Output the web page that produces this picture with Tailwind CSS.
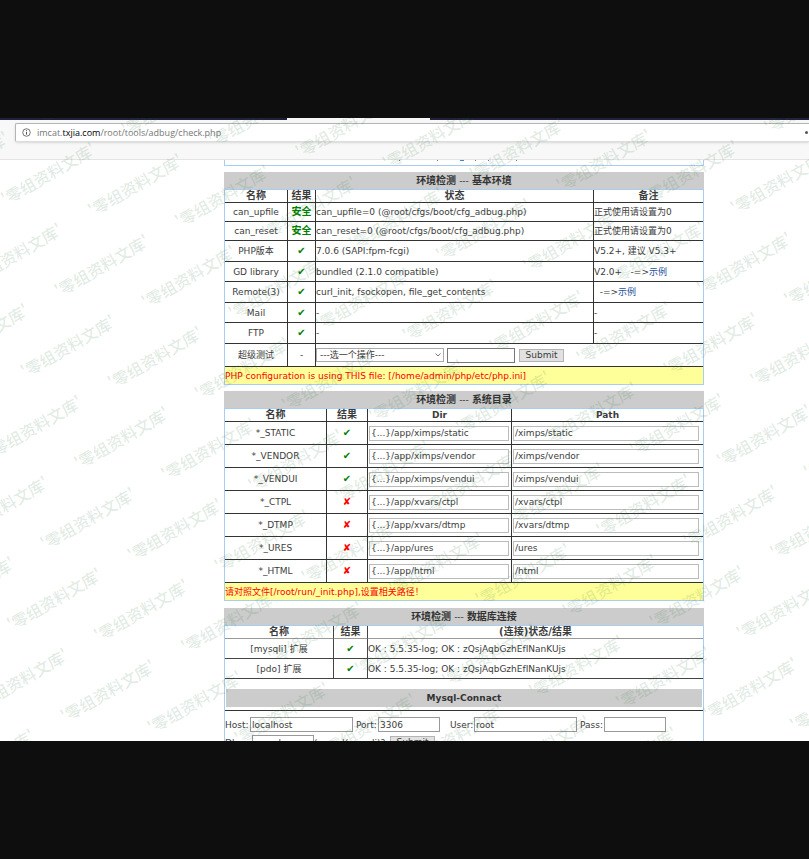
<!DOCTYPE html>
<html lang="zh-CN">
<head>
<meta charset="utf-8">
<title>环境检测</title>
<script src="https://cdn.jsdelivr.net/npm/@tailwindcss/browser@4"></script>
</head>
<body class="flex h-screen flex-col bg-[#0e0e0e] py-[118px] text-[9px] leading-3 text-[#3c3c3c] font-['DejaVu_Sans','Noto_Sans_CJK_SC',sans-serif]">
<div class="relative flex min-h-0 flex-1 flex-col overflow-hidden bg-white">

  <header class="shrink-0 border-b border-[#e4e4e4] bg-[#f8f8f8]">
    <div class="flex h-[2px] bg-[#20203c]"><div class="ml-[287px] w-[143px] bg-[#f8f8f8]"></div></div>
    <div class="h-[39px] pt-[3px] pl-[15px]">
      <div class="flex h-[19px] items-center rounded-l-xs border-y border-l border-t-[#b4b4b4] border-b-[#dcdcdc] border-l-[#b4b4b4] bg-white pl-1.5 shadow-sm">
        <svg class="mr-1.5 size-[9px] shrink-0" viewBox="0 0 10 10" fill="none" stroke="#555" aria-hidden="true"><circle cx="5" cy="5" r="4.2" stroke-width=".9"/><path d="M5 4.4v3M5 2.4v1.1" stroke-width="1.1"/></svg>
        <a href="#" class="flex-1 text-[9px] text-[#777] font-['Open_Sans',sans-serif]">imcat.<span class="text-black">txjia.com</span>/root/tools/adbug/check.php</a>
        <button type="button" aria-label="更多" class="mr-px flex gap-0.5"><span class="size-[3px] rounded-full bg-[#555]"></span></button>
      </div>
    </div>
  </header>

  <main class="mr-[105px] ml-56 flex flex-col">
    <div class="mb-1.5 h-[6px] border-x border-b border-[#a9cdf0]">
      <svg class="block h-[2px] w-full" aria-hidden="true"><path d="M174 .5h1M212 .5h1M250 .5h1M291 .5h1" stroke="#777"/><path d="M235 .5h4M263 .5h1" stroke="#3f86d0"/></svg>
    </div>

    <section class="mb-1.5">
      <h2 class="flex h-[17px] items-center justify-center gap-[3px] bg-[#ccc] pt-px text-[10px] font-bold text-[#333]">环境检测 <span class="text-[9px] font-normal">---</span> 基本环境</h2>
      <div class="border border-[#a9cdf0]">
        <table class="w-full table-fixed border-separate border-spacing-0 text-center [&_td]:border-b [&_td]:border-[#333] [&_td]:p-0 [&_th]:h-[13px] [&_th]:border-b [&_th]:border-[#333] [&_th]:p-0 [&_th]:text-[10px] [&_td+td]:border-l [&_th+th]:border-l [&_tr>:nth-child(n+3)]:whitespace-nowrap">
          <colgroup><col class="w-[62px]"><col class="w-[28px]"><col><col class="w-[110px]"></colgroup>
          <thead><tr><th>名称</th><th>结果</th><th>状态</th><th>备注</th></tr></thead>
          <tbody>
            <tr class="h-[19px]"><td>can_upfile</td><td class="text-[10px] font-bold text-[#008000]">安全</td><td class="text-left">can_upfile=0 (@root/cfgs/boot/cfg_adbug.php)</td><td class="text-left">正式使用请设置为0</td></tr>
            <tr class="h-[19px]"><td>can_reset</td><td class="text-[10px] font-bold text-[#008000]">安全</td><td class="text-left">can_reset=0 (@root/cfgs/boot/cfg_adbug.php)</td><td class="text-left">正式使用请设置为0</td></tr>
            <tr class="h-[21px]"><td>PHP版本</td><td class="text-[10px] font-bold text-[#008000]">✔</td><td class="text-left">7.0.6 (SAPI:fpm-fcgi)</td><td class="text-left">V5.2+, 建议 V5.3+</td></tr>
            <tr class="h-[20px]"><td>GD library</td><td class="text-[10px] font-bold text-[#008000]">✔</td><td class="text-left">bundled (2.1.0 compatible)</td><td class="text-left">V2.0+ &nbsp; -=&gt;<a href="#" class="text-[#1c4f9c]">示例</a></td></tr>
            <tr class="h-[21px]"><td>Remote(3)</td><td class="text-[10px] font-bold text-[#008000]">✔</td><td class="text-left">curl_init, fsockopen, file_get_contents</td><td class="text-left">&nbsp; -=&gt;<a href="#" class="text-[#1c4f9c]">示例</a></td></tr>
            <tr class="h-[20px]"><td>Mail</td><td class="text-[10px] font-bold text-[#008000]">✔</td><td class="text-left">-</td><td class="text-left">-</td></tr>
            <tr class="h-[21px]"><td>FTP</td><td class="text-[10px] font-bold text-[#008000]">✔</td><td class="text-left">-</td><td class="text-left">-</td></tr>
            <tr class="h-[23px]"><td>超级测试</td><td>-</td>
              <td colspan="2">
                <form class="flex items-center">
                  <span class="relative flex">
                    <select aria-label="选一个操作" class="h-[14px] w-[128px] appearance-none border border-[#aaa] bg-white pl-[3px] leading-3"><option>---选一个操作---</option></select>
                    <svg class="pointer-events-none absolute top-[5px] right-[3px] h-[4px] w-[6px]" viewBox="0 0 6 4" fill="none" stroke="#777" aria-hidden="true"><path d="M.5.5 3 3 5.5.5"/></svg>
                  </span>
                  <input aria-label="参数" class="ml-[3px] h-[15px] w-[68px] border border-[#777] bg-white px-0.5">
                  <button type="button" class="ml-1 h-[13px] w-[45px] border border-[#b4b4b4] bg-[#e1e1e1] leading-[11px]">Submit</button>
                </form>
              </td></tr>
          </tbody>
        </table>
        <p class="h-[17px] bg-[#ff9] text-[9px] leading-[18px] text-[#f00]">PHP configuration is using THIS file: [/home/admin/php/etc/php.ini]</p>
      </div>
    </section>

    <section class="mb-[7px]">
      <h2 class="flex h-[17px] items-center justify-center gap-[3px] bg-[#ccc] pt-px text-[10px] font-bold text-[#333]">环境检测 <span class="text-[9px] font-normal">---</span> 系统目录</h2>
      <div class="border border-[#a9cdf0]">
        <table class="w-full table-fixed border-separate border-spacing-0 text-center [&_input]:block [&_input]:h-[15px] [&_input]:w-full [&_input]:border [&_input]:border-[#bbb] [&_input]:bg-white [&_input]:px-px [&_td]:h-[23px] [&_td]:border-b [&_td]:border-[#333] [&_td]:p-0 [&_th]:h-[13px] [&_th]:border-b [&_th]:border-[#333] [&_th]:p-0 [&_td+td]:border-l [&_th+th]:border-l [&_td:nth-child(3)]:pr-0.5 [&_td:nth-child(3)]:pl-px [&_td:nth-child(4)]:pr-1 [&_td:nth-child(4)]:pl-px">
          <colgroup><col class="w-[101px]"><col class="w-[41px]"><col class="w-[144px]"><col></colgroup>
          <thead><tr><th class="text-[10px]">名称</th><th class="text-[10px]">结果</th><th>Dir</th><th>Path</th></tr></thead>
          <tbody>
            <tr><td>*_STATIC</td><td class="text-[10px] font-bold text-[#008000]">✔</td><td><input aria-label="STATIC Dir" value="{...}/app/ximps/static"></td><td><input aria-label="STATIC Path" value="/ximps/static"></td></tr>
            <tr><td>*_VENDOR</td><td class="text-[10px] font-bold text-[#008000]">✔</td><td><input aria-label="VENDOR Dir" value="{...}/app/ximps/vendor"></td><td><input aria-label="VENDOR Path" value="/ximps/vendor"></td></tr>
            <tr><td>*_VENDUI</td><td class="text-[10px] font-bold text-[#008000]">✔</td><td><input aria-label="VENDUI Dir" value="{...}/app/ximps/vendui"></td><td><input aria-label="VENDUI Path" value="/ximps/vendui"></td></tr>
            <tr><td>*_CTPL</td><td class="text-[10px] font-bold text-[#f00]">✘</td><td><input aria-label="CTPL Dir" value="{...}/app/xvars/ctpl"></td><td><input aria-label="CTPL Path" value="/xvars/ctpl"></td></tr>
            <tr><td>*_DTMP</td><td class="text-[10px] font-bold text-[#f00]">✘</td><td><input aria-label="DTMP Dir" value="{...}/app/xvars/dtmp"></td><td><input aria-label="DTMP Path" value="/xvars/dtmp"></td></tr>
            <tr><td>*_URES</td><td class="text-[10px] font-bold text-[#f00]">✘</td><td><input aria-label="URES Dir" value="{...}/app/ures"></td><td><input aria-label="URES Path" value="/ures"></td></tr>
            <tr><td>*_HTML</td><td class="text-[10px] font-bold text-[#f00]">✘</td><td><input aria-label="HTML Dir" value="{...}/app/html"></td><td><input aria-label="HTML Path" value="/html"></td></tr>
          </tbody>
        </table>
        <p class="h-[17px] bg-[#ff9] text-[9px] leading-[18px] text-[#f00]">请对照文件[/root/run/_init.php],设置相关路径！</p>
      </div>
    </section>

    <section>
      <h2 class="flex h-[17px] items-center justify-center gap-[3px] bg-[#ccc] pt-px text-[10px] font-bold text-[#333]">环境检测 <span class="text-[9px] font-normal">---</span> 数据库连接</h2>
      <div class="border border-[#a9cdf0]">
        <table class="w-full table-fixed border-separate border-spacing-0 text-center [&_td]:h-[20px] [&_td]:border-b [&_td]:border-[#444] [&_td]:p-0 [&_th]:h-[13px] [&_th]:border-b [&_th]:border-[#999] [&_th]:p-0 [&_th]:text-[10px] [&_td+td]:border-l [&_th+th]:border-l [&_th+th]:border-l-[#444]">
          <colgroup><col class="w-[108px]"><col class="w-[34px]"><col></colgroup>
          <thead><tr><th>名称</th><th>结果</th><th>(连接)状态/结果</th></tr></thead>
          <tbody>
            <tr><td>[mysqli] 扩展</td><td class="text-[10px] font-bold text-[#008000]">✔</td><td class="text-left">OK : 5.5.35-log; OK : zQsjAqbGzhEfINanKUjs</td></tr>
            <tr><td>[pdo] 扩展</td><td class="text-[10px] font-bold text-[#008000]">✔</td><td class="text-left">OK : 5.5.35-log; OK : zQsjAqbGzhEfINanKUjs</td></tr>
          </tbody>
        </table>
        <div class="border-b border-[#333] px-px pt-2.5 pb-[3px]">
          <h3 class="flex h-[18px] items-center justify-center bg-[#ccc] font-bold text-[#333]">Mysql-Connact</h3>
        </div>
        <form class="flex flex-col gap-[3px] pt-1.5 whitespace-nowrap [&_input]:h-[15px] [&_input]:border [&_input]:border-[#999] [&_input]:bg-white [&_input]:px-px [&_label]:flex [&_label]:items-center">
          <div class="flex">
            <label><span class="w-[25px]">Host:</span><input class="w-[103px]" value="localhost"></label>
            <label class="ml-[3px]"><span class="w-[22px]">Port:</span><input class="w-[62px]" value="3306"></label>
            <label class="ml-[10px]"><span class="w-[24px]">User:</span><input class="w-[103px]" value="root"></label>
            <label class="ml-[3px]"><span class="w-[24px]">Pass:</span><input class="w-[62px]"></label>
          </div>
          <div class="flex items-center">
            <label><span class="w-[27px]">Dbs:</span><input class="w-[62px]" value="mysql"></label>
            <span class="w-[76px]">(mysql/mysqli)?</span>
            <button type="button" class="h-[13px] w-[45px] border border-[#b4b4b4] bg-[#e1e1e1] leading-[11px]">Submit</button>
          </div>
        </form>
      </div>
    </section>
  </main>

  <svg id="watermark" class="pointer-events-none absolute inset-0 size-full text-[16px] font-medium font-['Noto_Sans_CJK_SC',sans-serif]" fill="#1e6e32" fill-opacity=".14" aria-hidden="true"></svg>
</div>
<script>
  // Slanted watermark repeated over a skewed grid
  const layer = document.getElementById('watermark');
  const w = window.innerWidth, h = window.innerHeight - 236;
  for (let row = -4; row < 14; row++) {
    for (let col = -4; col < 20; col++) {
      const x = 6 + col * 87 - row * 33.6;
      const y = 88 + col * 11.2 + row * 80.6;
      if (x < -95 || x > w || y < 6 || y > h + 54) continue;
      const t = document.createElementNS('http://www.w3.org/2000/svg', 'text');
      t.setAttribute('transform', `translate(${x} ${y}) rotate(-30)`);
      t.textContent = "'零组资料文库'";
      layer.appendChild(t);
    }
  }
</script>
</body>
</html>
